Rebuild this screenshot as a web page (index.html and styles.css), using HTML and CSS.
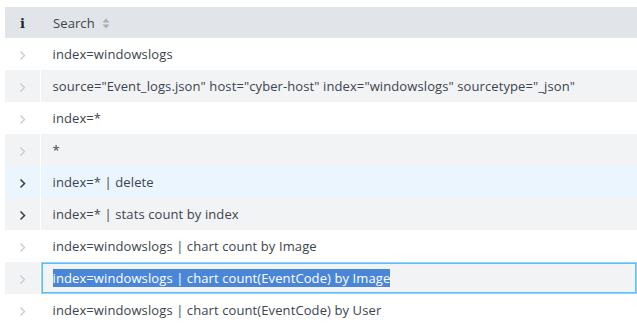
FILE: index.html
```html
<!DOCTYPE html>
<html lang="en">
<head>
  <meta charset="UTF-8">
  <title>Search history</title>
  <link rel="stylesheet" href="styles.css">
</head>
<body>
  <table class="history">
    <thead>
      <tr>
        <th class="info-col"><span class="info-icon">i</span></th>
        <th class="search-col">Search <svg class="sort-icon" width="8" height="11" viewBox="0 0 8 11"><path d="M4 0.5 L7.5 4.5 H0.5 Z M4 10.5 L7.5 6.5 H0.5 Z" fill="#a9b0b8"/></svg></th>
      </tr>
    </thead>
    <tbody>
      <tr><td class="expand"><svg class="chev" width="7" height="11" viewBox="0 0 7 11"><path d="M1.5 1.5 L5.5 5.5 L1.5 9.5" /></svg></td><td>index=windowslogs</td></tr>
      <tr class="odd"><td class="expand"><svg class="chev" width="7" height="11" viewBox="0 0 7 11"><path d="M1.5 1.5 L5.5 5.5 L1.5 9.5" /></svg></td><td>source="Event_logs.json" host="cyber-host" index="windowslogs" sourcetype="_json"</td></tr>
      <tr><td class="expand"><svg class="chev" width="7" height="11" viewBox="0 0 7 11"><path d="M1.5 1.5 L5.5 5.5 L1.5 9.5" /></svg></td><td>index=*</td></tr>
      <tr class="odd"><td class="expand"><svg class="chev" width="7" height="11" viewBox="0 0 7 11"><path d="M1.5 1.5 L5.5 5.5 L1.5 9.5" /></svg></td><td>*</td></tr>
      <tr class="hover"><td class="expand dark"><svg class="chev" width="7" height="11" viewBox="0 0 7 11"><path d="M1.5 1.5 L5.5 5.5 L1.5 9.5" /></svg></td><td>index=* | delete</td></tr>
      <tr class="odd"><td class="expand dark"><svg class="chev" width="7" height="11" viewBox="0 0 7 11"><path d="M1.5 1.5 L5.5 5.5 L1.5 9.5" /></svg></td><td>index=* | stats count by index</td></tr>
      <tr><td class="expand"><svg class="chev" width="7" height="11" viewBox="0 0 7 11"><path d="M1.5 1.5 L5.5 5.5 L1.5 9.5" /></svg></td><td>index=windowslogs | chart count by Image</td></tr>
      <tr class="odd"><td class="expand"><svg class="chev" width="7" height="11" viewBox="0 0 7 11"><path d="M1.5 1.5 L5.5 5.5 L1.5 9.5" /></svg></td><td class="focused"><span class="selected">index=windowslogs | chart count(EventCode) by Image</span></td></tr>
      <tr><td class="expand"><svg class="chev" width="7" height="11" viewBox="0 0 7 11"><path d="M1.5 1.5 L5.5 5.5 L1.5 9.5" /></svg></td><td>index=windowslogs | chart count(EventCode) by User</td></tr>
    </tbody>
  </table>
</body>
</html>
```

FILE: styles.css
```css
body {
  margin: 0;
  padding: 7px 0 0 5px;
  background-color: white;
  font-family: "Open Sans", Arial, sans-serif;
  font-size: 13px;
  letter-spacing: 0.1px;
  color: #3c444d;
}
.history {
  width: 632px;
  border-collapse: collapse;
}
.history th {
  background-color: #e1e4e8;
  height: 31px;
  padding: 0;
  text-align: left;
  font-weight: normal;
}
.info-col {
  width: 35px;
  text-align: center !important;
}
.info-icon {
  font-family: "DejaVu Serif", serif;
  font-weight: bold;
  font-size: 13px;
  color: #1f2328;
}
.search-col {
  padding-left: 13px !important;
}
.sort-icon {
  margin-left: 4px;
  vertical-align: -1px;
}
.history td {
  height: 32px;
  padding: 0 0 0 12px;
  white-space: nowrap;
}
.history td.expand {
  padding: 0;
  text-align: center;
  border-right: 1px solid white;
}
.chev {
  vertical-align: middle;
}
.chev path {
  fill: none;
  stroke: #c3cbd4;
  stroke-width: 1.3;
}
.dark .chev path {
  stroke: #3c444d;
  stroke-width: 1.6;
}
.odd {
  background-color: #f2f3f5;
}
.hover {
  background-color: #eaf5fd;
}
.focused {
  box-shadow: inset 0 0 0 1px #8fd3fb, inset 0 0 0 2px #5bc0f8;
}
.selected {
  background-color: #4a86d8;
  color: white;
}
```
